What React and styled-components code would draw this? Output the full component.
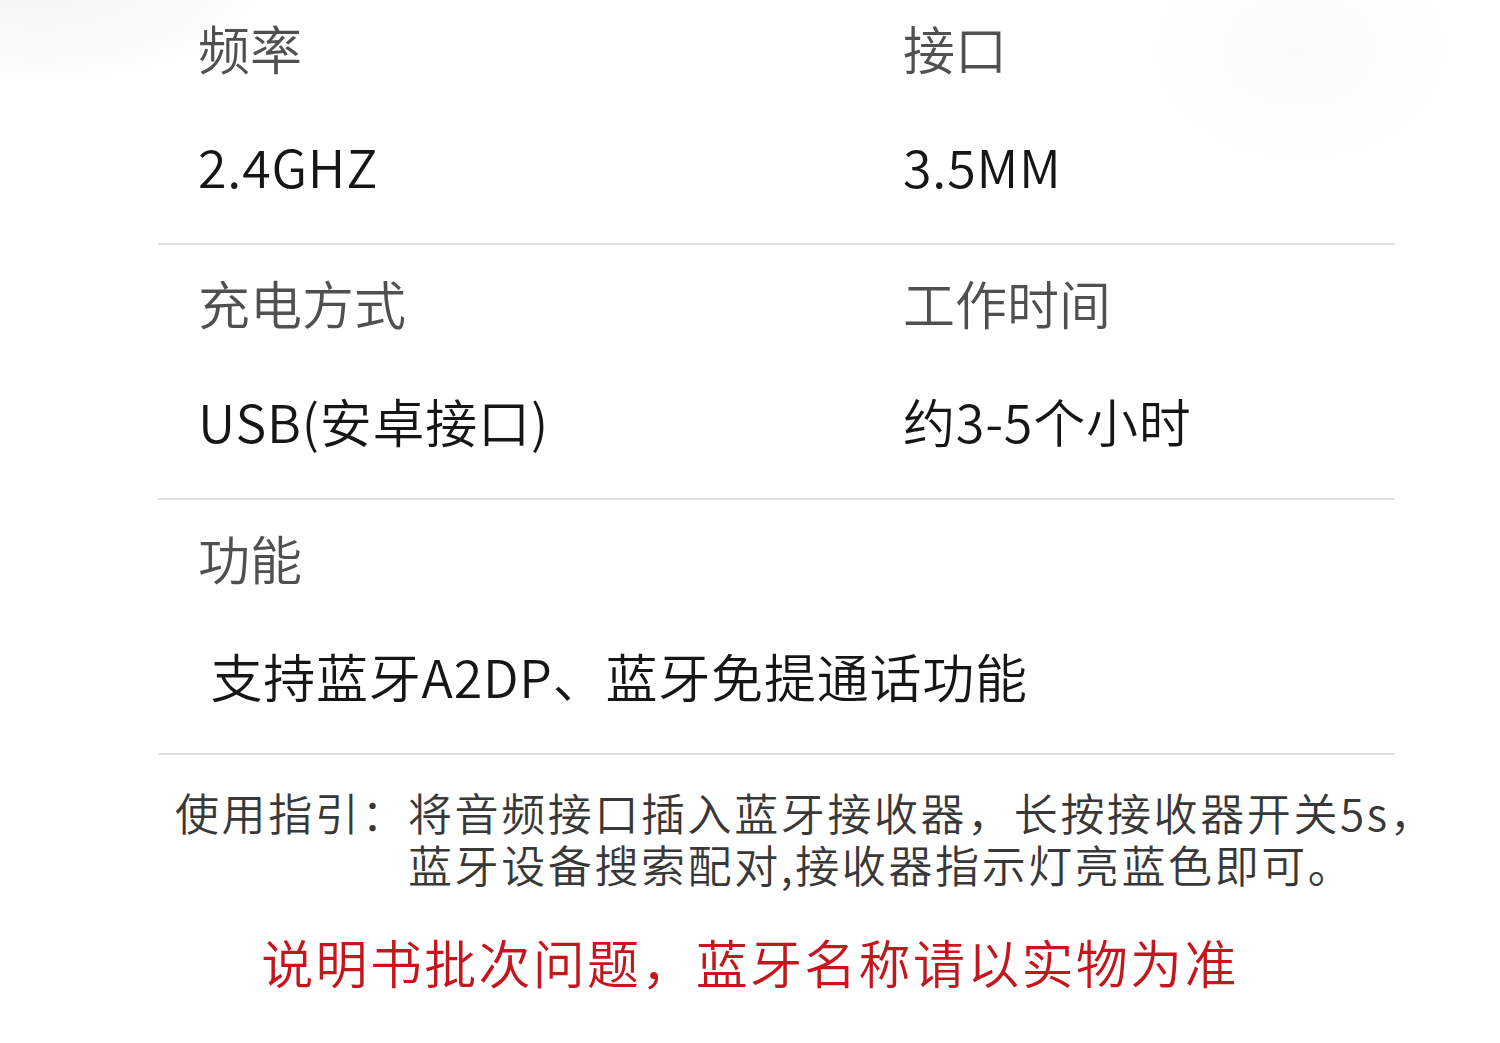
import styled, { createGlobalStyle } from "styled-components";

const GlobalStyle = createGlobalStyle`
  html, body {
    margin: 0;
    padding: 0;
    background: #ffffff;
  }
  body {
    font-family: "Noto Sans CJK SC", "Noto Sans", sans-serif;
  }
`;

const specs = [
  [
    { label: "频率", value: "2.4GHZ" },
    { label: "接口", value: "3.5MM" },
  ],
  [
    { label: "充电方式", value: "USB(安卓接口)" },
    { label: "工作时间", value: "约3-5个小时" },
  ],
  [{ label: "功能", value: " 支持蓝牙A2DP、蓝牙免提通话功能", wide: true }],
];

const App = () => {
  return (
    <Page>
      <GlobalStyle />
      <SpecTable>
        {specs.map((row, i) => (
          <SpecRow key={i} $first={i === 0}>
            {row.map((cell) => (
              <SpecCell key={cell.label} $wide={cell.wide}>
                <Label>{cell.label}</Label>
                <Value>{cell.value}</Value>
              </SpecCell>
            ))}
          </SpecRow>
        ))}
      </SpecTable>
      <Guide>
        <GuidePrefix>使用指引：</GuidePrefix>
        <GuideBody>
          <span>将音频接口插入蓝牙接收器，长按接收器开关5s，</span>
          <span>蓝牙设备搜索配对,接收器指示灯亮蓝色即可。</span>
        </GuideBody>
      </Guide>
      <Notice>说明书批次问题，蓝牙名称请以实物为准</Notice>
    </Page>
  );
};

const Page = styled.div`
  width: 1500px;
  height: 1043px;
  overflow: hidden;
  background:
    radial-gradient(ellipse 240px 110px at 40px -20px, #f5f5f5 0%, #fafafa 65%, rgba(255, 255, 255, 0) 100%),
    radial-gradient(ellipse 200px 150px at 1300px 50px, #fbfbfb 0%, rgba(255, 255, 255, 0) 100%),
    #ffffff;
`;

const SpecTable = styled.div`
  width: 1237px;
  margin-left: 158px;
  display: flex;
  flex-direction: column;
`;

const SpecRow = styled.div`
  display: grid;
  grid-template-columns: 705px 1fr;
  padding: ${(props) => (props.$first ? "18px" : "28px")} 0 47px 40px;
  border-bottom: 2px solid #e0e0e0;
`;

const SpecCell = styled.div`
  display: flex;
  flex-direction: column;
  gap: 58px;
  grid-column: ${(props) => (props.$wide ? "1 / -1" : "auto")};
`;

const Label = styled.div`
  font-size: 52px;
  font-weight: 350;
  line-height: 60px;
  color: #505050;
  white-space: pre;
`;

const Value = styled.div`
  font-size: 52px;
  font-weight: 350;
  line-height: 60px;
  letter-spacing: 0.8px;
  color: #161616;
  white-space: pre;
`;

const Guide = styled.div`
  display: flex;
  margin-top: 31px;
  padding-left: 175px;
  font-size: 44px;
  font-weight: 350;
  line-height: 52px;
  letter-spacing: 2.6px;
  color: #383838;
  white-space: nowrap;
`;

const GuidePrefix = styled.span`
  flex: none;
`;

const GuideBody = styled.div`
  display: flex;
  flex-direction: column;
`;

const Notice = styled.div`
  margin-top: 46px;
  text-align: center;
  font-size: 52px;
  font-weight: 350;
  line-height: 52px;
  letter-spacing: 2.3px;
  color: #c5161d;
`;

export default App;
